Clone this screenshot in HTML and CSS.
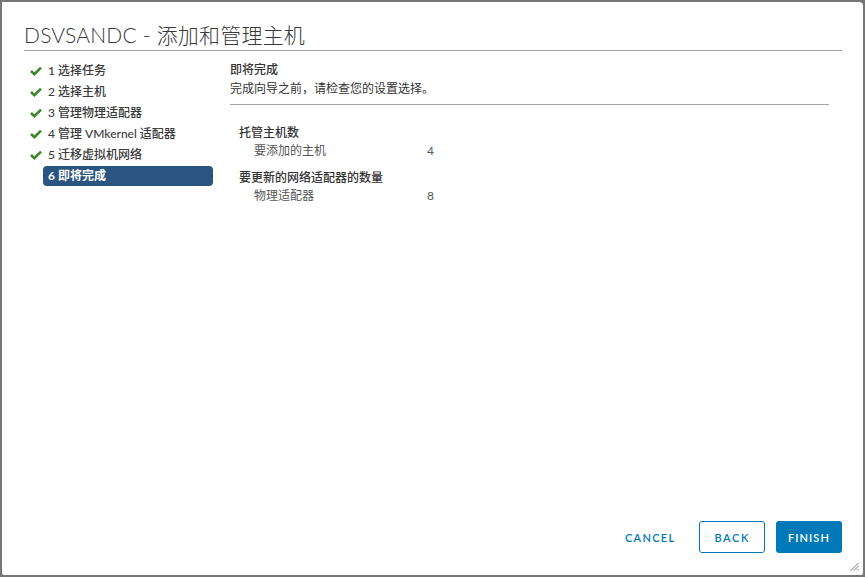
FILE: index.html
```html
<!DOCTYPE html>
<html lang="zh-CN">

<head>
    <meta charset="UTF-8">
    <meta name="viewport" content="width=device-width, initial-scale=1.0">
    <title>DSVSANDC - 添加和管理主机</title>
    <link rel="stylesheet" href="styles.css">
</head>

<body>

    <div class="modal">

        <h1 class="modal-title">DSVSANDC - 添加和管理主机</h1>

        <div class="modal-body">

            <ul class="steps">
                <li class="step">
                    <svg class="check" viewBox="0 0 12 10"><path d="M1 5 L4.4 8.2 L11 1.6" /></svg>
                    <span class="step-label">1 选择任务</span>
                </li>
                <li class="step">
                    <svg class="check" viewBox="0 0 12 10"><path d="M1 5 L4.4 8.2 L11 1.6" /></svg>
                    <span class="step-label">2 选择主机</span>
                </li>
                <li class="step">
                    <svg class="check" viewBox="0 0 12 10"><path d="M1 5 L4.4 8.2 L11 1.6" /></svg>
                    <span class="step-label">3 管理物理适配器</span>
                </li>
                <li class="step">
                    <svg class="check" viewBox="0 0 12 10"><path d="M1 5 L4.4 8.2 L11 1.6" /></svg>
                    <span class="step-label">4 管理 VMkernel 适配器</span>
                </li>
                <li class="step">
                    <svg class="check" viewBox="0 0 12 10"><path d="M1 5 L4.4 8.2 L11 1.6" /></svg>
                    <span class="step-label">5 迁移虚拟机网络</span>
                </li>
                <li class="step active">
                    <span class="step-label">6 即将完成</span>
                </li>
            </ul>

            <div class="content">
                <div class="content-head">
                    <h2>即将完成</h2>
                    <p>完成向导之前，请检查您的设置选择。</p>
                </div>

                <div class="summary">
                    <div class="group">
                        <div class="group-title">托管主机数</div>
                        <div class="row"><span class="row-label">要添加的主机</span><span>4</span></div>
                    </div>
                    <div class="group">
                        <div class="group-title">要更新的网络适配器的数量</div>
                        <div class="row"><span class="row-label">物理适配器</span><span>8</span></div>
                    </div>
                </div>
            </div>

        </div>

        <div class="modal-footer">
            <button class="btn btn-link">CANCEL</button>
            <button class="btn btn-outline">BACK</button>
            <button class="btn btn-primary">FINISH</button>
        </div>

        <svg class="grip" viewBox="0 0 9 9">
            <path d="M8.5 1 L1 8.5 M8.5 4 L4 8.5 M8.5 7 L7 8.5" />
        </svg>

    </div>

</body>

</html>
```

FILE: styles.css
```css
* {
    margin: 0;
    padding: 0;
    list-style: none;
    box-sizing: border-box;
}

html,
body {
    height: 100%;
}

body {
    background-color: #777;
    padding: 2px;
    font-family: Lato, "Noto Sans CJK SC", sans-serif;
    font-size: 12px;
    color: #333;
}

.modal {
    position: relative;
    height: 100%;
    display: flex;
    flex-direction: column;
    background-color: #fff;
    border-radius: 0 4px 2px 2px;
    padding: 19px 21px 22px 22px;
}

.modal-title {
    font-size: 21px;
    font-weight: 300;
    line-height: 28px;
    letter-spacing: 0.2px;
    color: #3a3a3a;
    padding-bottom: 1px;
    border-bottom: 1px solid #a3a3a3;
}

.modal-body {
    display: flex;
    padding-top: 9px;
    flex: 1;
}

/* 左侧步骤 */
.steps {
    width: 183px;
    margin-left: 6px;
}

.step {
    display: flex;
    align-items: center;
    height: 21px;
    padding-left: 13px;
    position: relative;
}

.check {
    position: absolute;
    left: 0;
    top: 6px;
    width: 12px;
    height: 10px;
    fill: none;
    stroke: #3a8a28;
    stroke-width: 2.6;
}

.step-label {
    flex: 1;
    padding-left: 5px;
    line-height: 20px;
    font-weight: 500;
    color: #3b3b3b;
}

.step.active .step-label {
    background-color: #2b5580;
    color: #fff;
    border-radius: 4px;
    font-weight: 700;
}

/* 右侧内容 */
.content {
    flex: 1;
    margin-left: 17px;
    margin-right: 13px;
}

.content-head {
    padding-bottom: 6px;
    border-bottom: 1px solid #a3a3a3;
}

.content-head h2 {
    font-size: 12px;
    font-weight: 500;
    line-height: 20px;
    color: #333;
}

.content-head p {
    line-height: 18px;
    color: #333;
}

.summary {
    padding-left: 9px;
    padding-top: 18px;
}

.group + .group {
    margin-top: 9px;
}

.group-title {
    line-height: 20px;
    font-weight: 500;
    color: #333;
}

.row {
    display: flex;
    line-height: 16px;
    padding-left: 15px;
    color: #565656;
}

.row-label {
    width: 173px;
}

/* 底部按钮 */
.modal-footer {
    display: flex;
    justify-content: flex-end;
}

.btn {
    height: 32px;
    padding: 0 12px;
    margin-left: 11px;
    font-family: Lato, sans-serif;
    font-size: 11px;
    letter-spacing: 1.3px;
    font-weight: 600;
    border-radius: 3px;
    background: none;
    border: 1px solid transparent;
    color: #0079b8;
    cursor: pointer;
}

.btn-outline {
    border-color: #0079b8;
    padding: 0 14px;
    letter-spacing: 1.6px;
}

.btn-primary {
    background-color: #0079b8;
    color: #fff;
    padding: 0 11px;
    letter-spacing: 1.1px;
}

.grip {
    position: absolute;
    right: 4px;
    bottom: 4px;
    width: 9px;
    height: 9px;
    stroke: #777;
    stroke-width: 1;
}
```
